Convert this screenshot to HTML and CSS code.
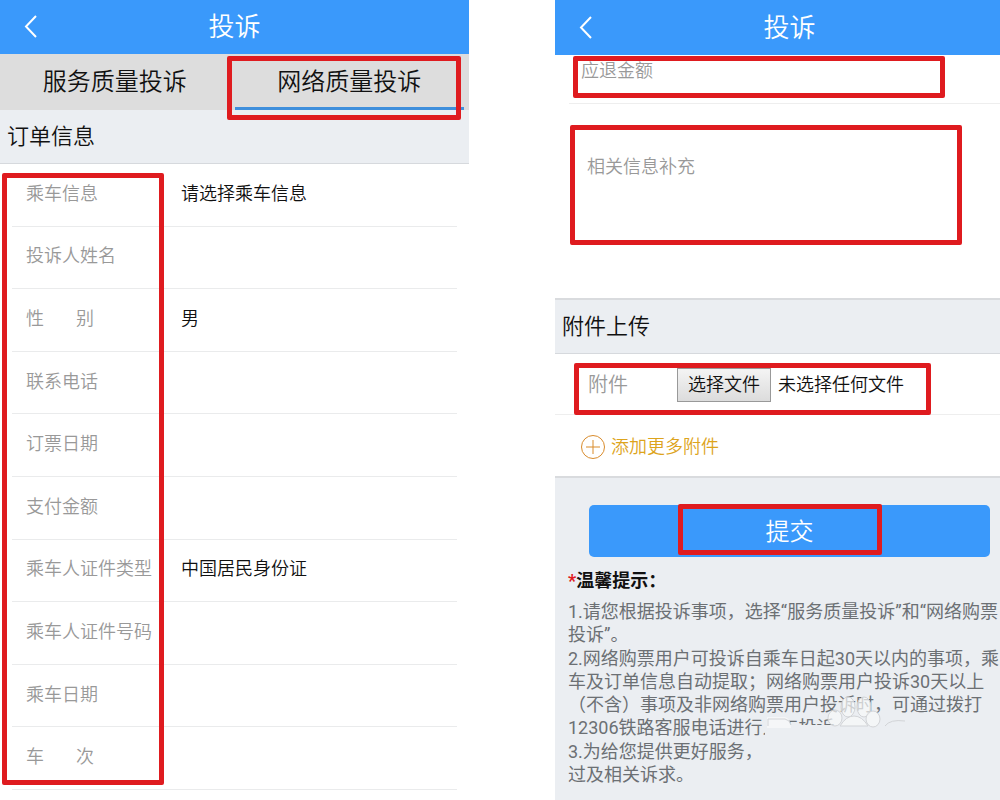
FILE: index.html
```
<!DOCTYPE html>
<html lang="zh-CN">
  <head>
    <meta charset="UTF-8" />
    <meta name="viewport" content="width=device-width, initial-scale=1.0" />
    <title>投诉</title>
    <link rel="stylesheet" href="styles.css">
  </head>
  <body>
    <div class="screens">
      <!-- 订单信息 -->
      <section class="screen">
        <header class="top-bar">
          <button class="back" type="button" aria-label="返回">
            <svg width="14" height="24" viewBox="0 0 14 24"><path d="M12 1 2 11.500 12 22" /></svg>
          </button>
          <h1>投诉</h1>
        </header>

        <nav class="tabs">
          <a href="#service">服务质量投诉</a>
          <a href="#network" class="active">网络质量投诉</a>
          <div class="mark mark-tab"></div>
        </nav>

        <h2 class="section-title">订单信息</h2>

        <form class="order-form">
          <div class="row">
            <label for="trip">乘车信息</label>
            <select id="trip"><option>请选择乘车信息</option></select>
          </div>
          <div class="row">
            <label for="name">投诉人姓名</label>
            <input type="text" id="name" />
          </div>
          <div class="row">
            <label for="gender" class="spaced"><span>性</span><span>别</span></label>
            <select id="gender"><option>男</option><option>女</option></select>
          </div>
          <div class="row">
            <label for="phone">联系电话</label>
            <input type="tel" id="phone" />
          </div>
          <div class="row">
            <label for="book-date">订票日期</label>
            <input type="text" id="book-date" />
          </div>
          <div class="row">
            <label for="amount">支付金额</label>
            <input type="text" id="amount" />
          </div>
          <div class="row">
            <label for="id-type">乘车人证件类型</label>
            <select id="id-type"><option>中国居民身份证</option></select>
          </div>
          <div class="row">
            <label for="id-number">乘车人证件号码</label>
            <input type="text" id="id-number" />
          </div>
          <div class="row">
            <label for="trip-date">乘车日期</label>
            <input type="text" id="trip-date" />
          </div>
          <div class="row">
            <label for="train" class="spaced"><span>车</span><span>次</span></label>
            <input type="text" id="train" />
          </div>
          <div class="mark mark-labels"></div>
        </form>
      </section>

      <!-- 附件上传 -->
      <section class="screen screen-upload">
        <header class="top-bar">
          <button class="back" type="button" aria-label="返回">
            <svg width="14" height="24" viewBox="0 0 14 24"><path d="M12 1 2 11.500 12 22" /></svg>
          </button>
          <h1>投诉</h1>
        </header>

        <form class="upload-form">
          <div class="refund">
            <label for="refund">应退金额</label>
            <input type="text" id="refund" />
            <div class="mark mark-refund"></div>
          </div>

          <div class="extra">
            <textarea placeholder="相关信息补充" aria-label="相关信息补充"></textarea>
            <div class="mark mark-extra"></div>
          </div>

          <h2 class="section-title">附件上传</h2>

          <div class="file-row">
            <span class="file-label">附件</span>
            <input type="file" id="file" class="file-input" />
            <label for="file" class="file-button">选择文件</label>
            <span>未选择任何文件</span>
            <div class="mark mark-file"></div>
          </div>

          <a href="#more" class="add-more">
            <svg width="26" height="26" viewBox="0 0 26 26">
              <circle cx="13" cy="13" r="11.500" />
              <path d="M13 6v14M6 13h14" />
            </svg>
            添加更多附件
          </a>

          <div class="bottom">
            <div class="submit-wrap">
              <button class="submit" type="submit">提交</button>
              <div class="mark mark-submit"></div>
            </div>

            <div class="tips">
              <h3><span class="star">*</span>温馨提示：</h3>
              <p>1.请您根据投诉事项，选择“服务质量投诉”和“网络购票<br />投诉”。</p>
              <p>2.网络购票用户可投诉自乘车日起30天以内的事项，乘<br />车及订单信息自动提取；网络购票用户投诉30天以上<br />（不含）事项及非网络购票用户投诉时，可通过拨打<br />12306铁路客服电话进行人工投诉</p>
              <p>3.为给您提供更好服务，<br />过及相关诉求。</p>
              <svg class="paw" width="150" height="54" viewBox="0 0 150 54">
                <path class="cover" d="M0 32h150v14H0z" />
                <path class="pale" d="M2 35V24h18q5 1 6 11z" />
                <g class="toes">
                  <ellipse cx="83" cy="14" rx="7" ry="10" />
                  <ellipse cx="99" cy="14" rx="7" ry="10" />
                  <ellipse cx="70" cy="25" rx="7" ry="8" />
                  <ellipse cx="108" cy="26" rx="7" ry="8" />
                  <path d="M75 33q6-10 14-10t14 10z" />
                </g>
                <path class="line" d="M3 33v-7h17q5 1 6 6M120 33q5-7 20-5" />
              </svg>
            </div>
          </div>
        </form>
      </section>
    </div>
  </body>
</html>
```
FILE: styles.css
```
* {
  box-sizing: border-box;
}
body {
  margin: 0;
  background-color: #fff;
  color: #111;
  font-family: Roboto, "Noto Sans CJK SC", sans-serif;
  font-size: 18px;
  font-weight: 350;
  line-height: 24px;
}
h1,
h2,
h3,
p {
  margin: 0;
  font-weight: 350;
}
input,
select,
textarea,
button {
  font: inherit;
  color: inherit;
  border: none;
  background: none;
  padding: 0;
  outline: none;
}
select {
  appearance: none;
}
.screens {
  display: grid;
  grid-template-columns: 469fr 445fr;
  gap: 86px;
  min-height: 100vh;
  overflow: hidden;
}
.screen {
  display: flex;
  flex-direction: column;
}
/* 右侧屏幕超出窗口一部分 */
.screen-upload {
  margin-right: -24px;
}

/* 顶部栏 */
.top-bar {
  display: grid;
  grid-template-columns: 24px 1fr 24px;
  align-items: center;
  height: 54px;
  padding: 0 24px;
  background-color: #3a99fb;
  color: #fff;
}
.screen-upload .top-bar {
  height: 55px;
}
.top-bar h1 {
  font-size: 26px;
  line-height: 32px;
  text-align: center;
}
.back {
  height: 24px;
  text-align: left;
}
.back svg {
  display: block;
  fill: none;
  stroke: #fff;
  stroke-width: 2;
}

/* 标签 */
.tabs {
  position: relative;
  display: grid;
  grid-template-columns: 1fr 1fr;
  gap: 5px;
  height: 56px;
  padding-right: 5px;
  background-color: #ddd;
}
.tabs a {
  padding-top: 4px;
  border-bottom: 3px solid transparent;
  color: #111;
  font-size: 24px;
  line-height: 49px;
  text-align: center;
  text-decoration: none;
}
.tabs .active {
  border-color: #3f8fdc;
}

.section-title {
  padding: 0 7px;
  background-color: #ebeef2;
  border-bottom: 1px solid #d6d9dd;
  font-size: 22px;
  line-height: 53px;
}

/* 订单表单 */
.order-form {
  position: relative;
  display: grid;
  grid-auto-rows: 1fr;
  min-height: 626px;
  padding: 0 12px;
}
.row {
  display: grid;
  grid-template-columns: 155px 1fr;
  align-items: center;
  padding: 0 0 2px 14px;
  border-bottom: 1px solid #eaebec;
}
.row label {
  color: #999;
}
.row input,
.row select {
  width: 100%;
  height: 40px;
}
.spaced {
  display: flex;
  gap: 32px;
}

/* 上传表单 */
.upload-form {
  display: flex;
  flex-direction: column;
  flex: 1;
}
.refund {
  position: relative;
  display: flex;
  align-items: flex-start;
  gap: 12px;
  height: 49px;
  margin-left: 14px;
  padding: 4px 12px;
  border-bottom: 1px solid #eee;
}
.refund label {
  color: #999;
}
.refund input {
  flex: 1;
}
.extra {
  position: relative;
  padding: 48px 32px 0;
}
.extra textarea {
  display: block;
  width: 100%;
  height: 146px;
  line-height: 30px;
  resize: none;
}
.extra textarea::placeholder {
  color: #999;
}
.screen-upload .section-title {
  border-top: 2px solid #d9dbde;
}
.file-row {
  position: relative;
  display: flex;
  align-items: center;
  height: 61px;
  padding: 2px 33px 0;
  border-bottom: 1px solid #eee;
}
.file-label {
  width: 89px;
  color: #999;
  font-size: 20px;
}
.file-input {
  position: absolute;
  opacity: 0;
  width: 1px;
  height: 1px;
}
.file-button {
  margin-right: 7px;
  padding: 0 10px;
  border: 1px solid #999;
  background: linear-gradient(#f4f4f4, #dcdcdc);
  line-height: 32px;
}
.add-more {
  display: flex;
  align-items: center;
  gap: 5px;
  height: 61px;
  padding: 2px 25px 0;
  color: #dda41c;
  text-decoration: none;
}
.add-more svg {
  fill: none;
  stroke: #d98b2b;
  stroke-width: 1;
}
.bottom {
  flex: 1;
  padding: 27px 13px 0;
  border-top: 2px solid #d9dbde;
  background-color: #ebeef2;
}
.submit-wrap {
  position: relative;
  margin: 0 21px;
}
.submit {
  display: block;
  width: 100%;
  height: 52px;
  padding-top: 2px;
  border-radius: 5px;
  background-color: #3a99fb;
  color: #fff;
  font-size: 24px;
  cursor: pointer;
}

/* 温馨提示 */
.tips {
  position: relative;
  margin-top: 11px;
  white-space: nowrap;
}
.tips h3 {
  margin-bottom: 6px;
  font-size: 18px;
  font-weight: bold;
  line-height: 26px;
}
.star {
  color: #e01b1f;
}
.tips p {
  margin-bottom: 1px;
  color: #6c7074;
  font-weight: 400;
  line-height: 23px;
}
.paw {
  position: absolute;
  left: 197px;
  top: 125px;
}
.paw .cover {
  fill: #ebeef2;
}
.paw .pale {
  fill: #f5f6f8;
}
.paw .toes {
  fill: #f8f9fa;
  fill-opacity: 0.7;
  stroke: #d2d4d7;
}
.paw .line {
  fill: none;
  stroke: #d2d4d7;
}

/* 红色标注框 */
.mark {
  position: absolute;
  border: 5px solid #df1b1f;
  border-radius: 2px;
  pointer-events: none;
}
.mark-tab {
  left: 227px;
  right: 8px;
  top: 2px;
  bottom: -10px;
}
.mark-labels {
  left: 2px;
  top: 9px;
  bottom: 5px;
  width: 162px;
}
.mark-refund {
  left: 4px;
  right: 79px;
  top: 1px;
  bottom: 5px;
}
.mark-extra {
  left: 15px;
  right: 62px;
  top: 21px;
  bottom: 53px;
}
.mark-file {
  left: 19px;
  right: 93px;
  top: 9px;
  bottom: -1px;
}
.mark-submit {
  left: 89px;
  right: 108px;
  top: -1px;
  bottom: 2px;
}
```
